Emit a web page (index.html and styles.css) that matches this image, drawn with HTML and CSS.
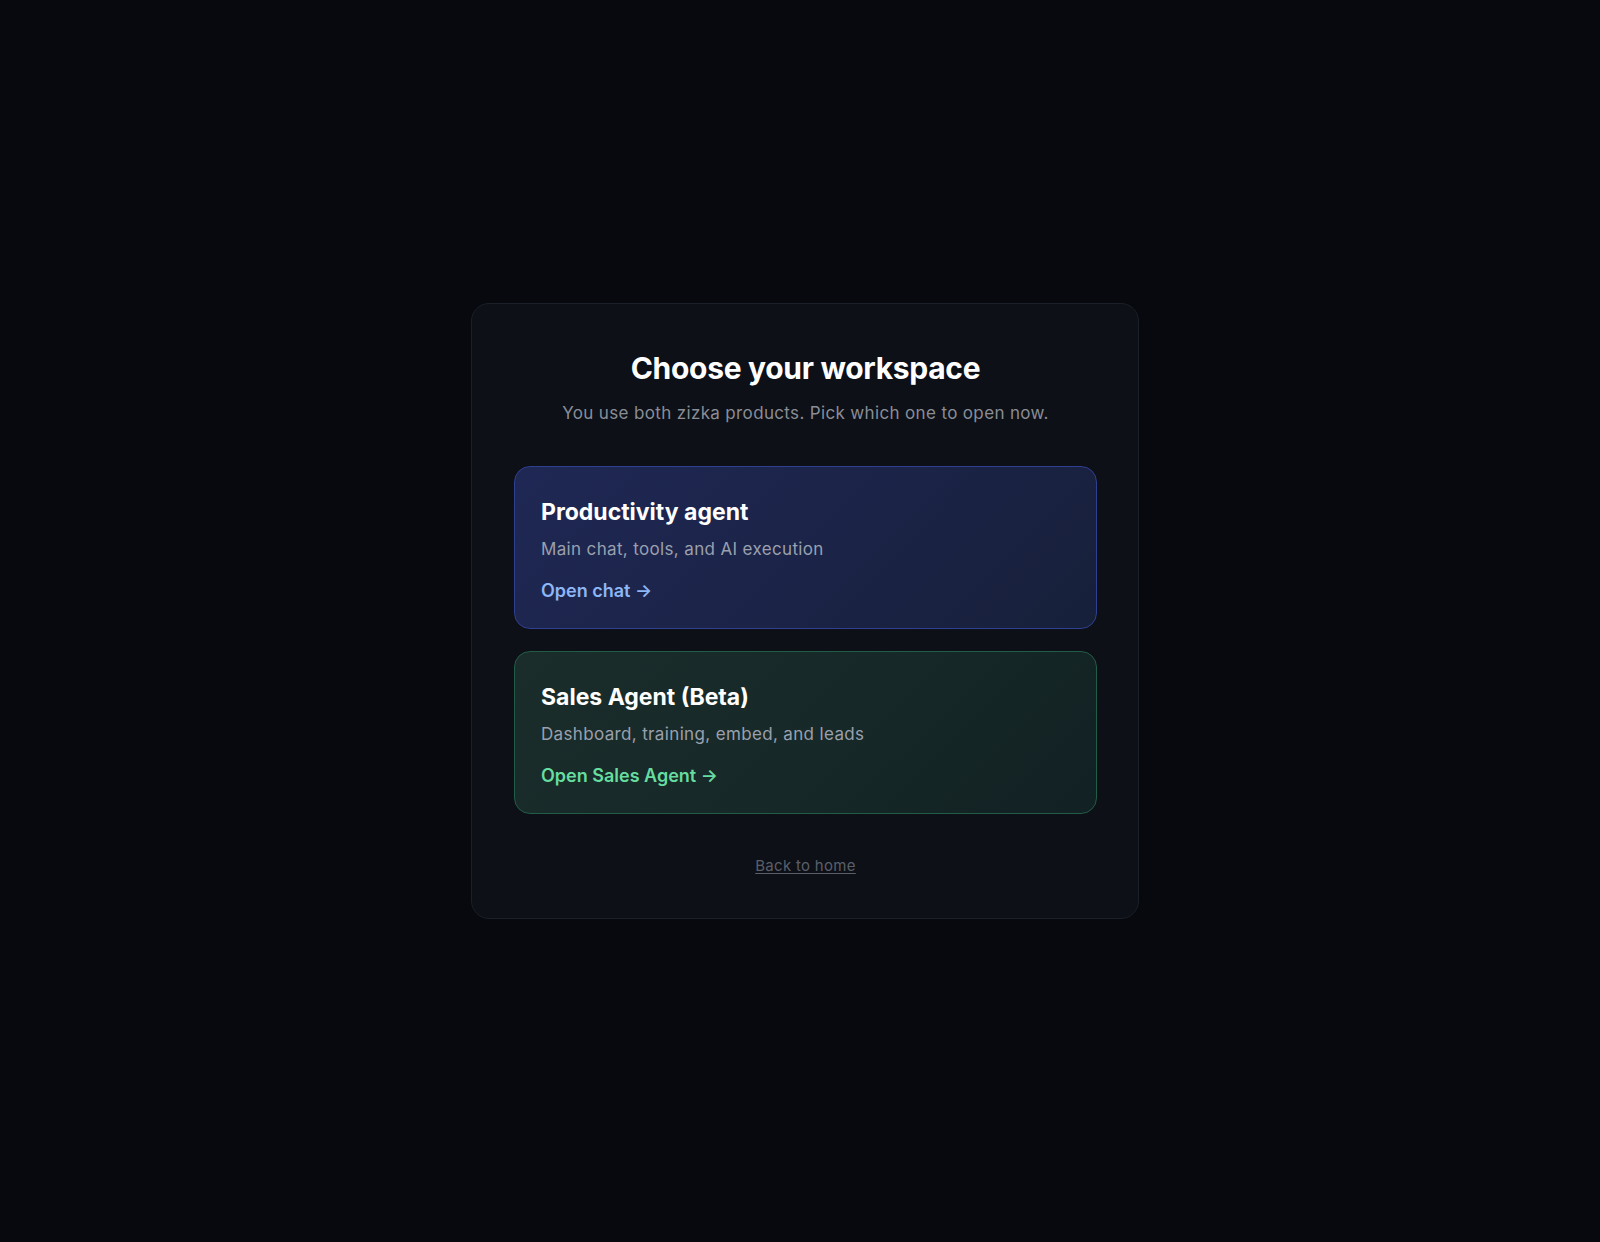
FILE: index.html
```html
<!DOCTYPE html>
<html lang="en">
<head>
<meta charset="utf-8">
<title>Choose your workspace</title>
<link rel="stylesheet" href="styles.css">
</head>
<body>
<main class="page">
  <section class="panel">
    <h1 class="panel-title">Choose your workspace</h1>
    <p class="panel-sub">You use both zizka products. Pick which one to open now.</p>
    <div class="options">
      <a class="option option-blue" href="#">
        <h2 class="option-title">Productivity agent</h2>
        <p class="option-desc">Main chat, tools, and AI execution</p>
        <span class="option-link">Open chat →</span>
      </a>
      <a class="option option-green" href="#">
        <h2 class="option-title">Sales Agent (Beta)</h2>
        <p class="option-desc">Dashboard, training, embed, and leads</p>
        <span class="option-link">Open Sales Agent →</span>
      </a>
    </div>
    <div class="back-row"><a class="back" href="#">Back to home</a></div>
  </section>
</main>
</body>
</html>
```
FILE: styles.css
```css
* { box-sizing: border-box; }
html, body { margin: 0; padding: 0; }
body {
  background: #07090e;
  font-family: Inter, "Noto Sans", "Liberation Sans", sans-serif;
  color: #ffffff;
}
.page {
  min-height: 100vh;
  display: flex;
  align-items: center;
  justify-content: center;
  padding: 0 0 20px 10px;
}
.panel {
  width: 668px;
  background: #0d1017;
  border: 1px solid #1b1f27;
  border-radius: 18px;
  padding: 46px 41px 41px 42px;
}
.panel-title {
  margin: 0;
  text-align: center;
  font-size: 30px;
  line-height: 36px;
  font-weight: 700;
  letter-spacing: -0.3px;
  color: #ffffff;
}
.panel-sub {
  margin: 14px 0 0;
  text-align: center;
  font-size: 17px;
  line-height: 26px;
  letter-spacing: 0.35px;
  color: #8a8d96;
}
.options {
  margin-top: 40px;
  display: flex;
  flex-direction: column;
  gap: 22px;
}
.option {
  display: block;
  text-decoration: none;
  border-radius: 16px;
  padding: 31px 26px 26px;
  height: 163px;
}
.option-blue {
  background: linear-gradient(135deg, #1f2854 0%, #1b2347 55%, #172039 100%);
  border: 1px solid #2f3f92;
}
.option-green {
  background: linear-gradient(135deg, #1b2d2b 0%, #162827 55%, #122124 100%);
  border: 1px solid #215c46;
}
.option-title {
  margin: 0;
  font-size: 23px;
  line-height: 28px;
  font-weight: 700;
  letter-spacing: 0;
  color: #ffffff;
}
.option-desc {
  margin: 11px 0 0;
  font-size: 17px;
  line-height: 24px;
  letter-spacing: 0.35px;
  color: #9aa0ae;
}
.option-link {
  display: block;
  margin-top: 18px;
  font-size: 18px;
  line-height: 24px;
  font-weight: 600;
}
.option-blue .option-link { color: #8db6f6; }
.option-green .option-link { color: #66dca0; }
.back-row {
  margin-top: 41px;
  text-align: center;
}
.back {
  font-size: 15px;
  line-height: 22px;
  letter-spacing: 0.3px;
  color: #5b5f69;
  text-decoration: underline;
  text-underline-offset: 2px;
}
```
